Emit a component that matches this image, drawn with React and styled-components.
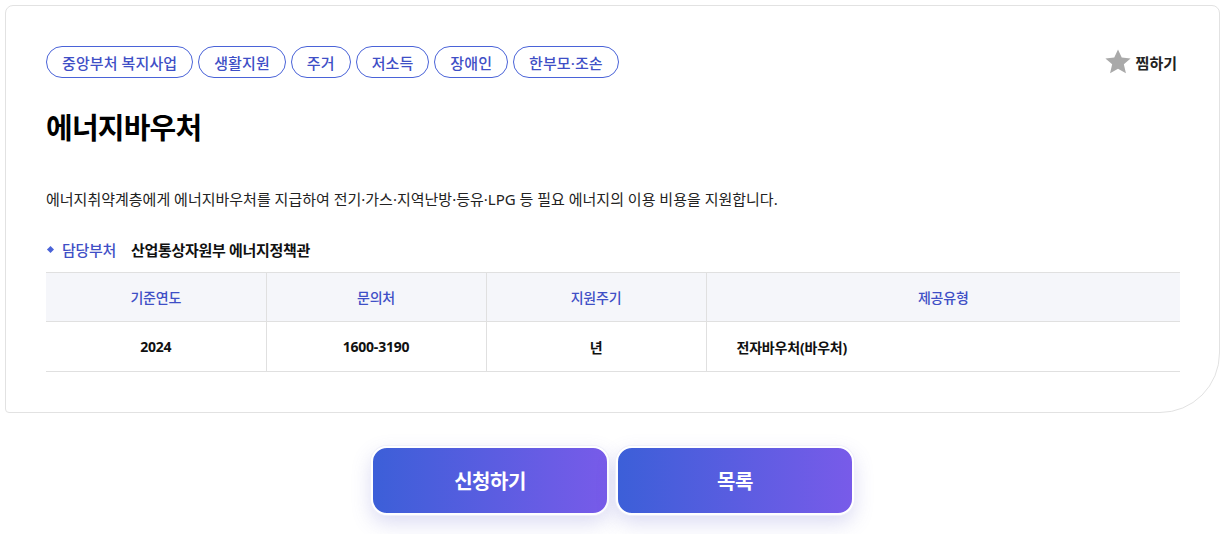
import React from 'react';
import styled, { createGlobalStyle } from 'styled-components';

const GlobalStyle = createGlobalStyle`
  html, body {
    margin: 0;
    padding: 0;
    background: #fff;
    font-family: "Noto Sans", "Noto Sans CJK KR", sans-serif;
    color: #111;
  }
`;

const Page = styled.div`
  padding: 5px 12px 20px 5px;
  width: 1232px;
  box-sizing: border-box;
`;

const Card = styled.section`
  border: 1px solid #e2e2e2;
  border-radius: 8px 8px 60px 4px;
  padding: 40px 39px 40px 40px;
  background: #fff;
`;

const TopRow = styled.div`
  display: flex;
  justify-content: space-between;
  align-items: center;
`;

const Chips = styled.div`
  display: flex;
  gap: 5px;
`;

const Chip = styled.span`
  display: inline-flex;
  align-items: center;
  height: 32px;
  padding: 0 15px;
  box-sizing: border-box;
  border: 1px solid #4a63d8;
  border-radius: 16px;
  color: #3f4fc6;
  font-size: 15px;
  font-weight: 500;
  letter-spacing: 0.1px;
`;

const Favorite = styled.button`
  display: flex;
  align-items: center;
  gap: 4px;
  border: 0;
  background: none;
  padding: 0;
  margin-right: 3px;
  font-family: inherit;
  font-size: 15px;
  font-weight: 700;
  color: #222;
  cursor: pointer;
`;

const Title = styled.h1`
  margin: 30px 0 0;
  font-size: 29px;
  font-weight: 700;
  letter-spacing: -0.8px;
  line-height: 40px;
  color: #000;
`;

const Desc = styled.p`
  margin: 40px 0 0;
  font-size: 15px;
  letter-spacing: 0;
  line-height: 22px;
  color: #222;
`;

const Dept = styled.div`
  display: flex;
  align-items: center;
  margin-top: 29px;
  font-size: 15px;
  letter-spacing: -0.3px;
`;

const DeptLabel = styled.span`
  display: flex;
  align-items: center;
  gap: 9px;
  color: #3f4fc6;
  font-weight: 500;
  margin-right: 15px;
  &::before {
    content: '';
    width: 5px;
    height: 5px;
    margin-left: 2px;
    background: #4a63d8;
    transform: rotate(45deg);
  }
`;

const DeptValue = styled.span`
  font-weight: 700;
  color: #111;
`;

const Table = styled.table`
  width: 100%;
  margin-top: 12px;
  border-collapse: collapse;
  table-layout: fixed;
  font-size: 14px;
  letter-spacing: -0.2px;
`;

const Th = styled.th`
  height: 48px;
  padding: 0;
  background: #f5f6fa;
  color: #3f4fc6;
  font-weight: 500;
  border-top: 1px solid #e0e0e0;
  border-bottom: 1px solid #e0e0e0;
  & + & {
    border-left: 1px solid #e0e0e0;
  }
`;

const Td = styled.td`
  height: 49px;
  padding: ${p => (p.left ? '0 0 0 30px' : '0')};
  text-align: ${p => (p.left ? 'left' : 'center')};
  font-weight: 700;
  color: #111;
  border-bottom: 1px solid #e0e0e0;
  & + & {
    border-left: 1px solid #e0e0e0;
  }
`;

const Actions = styled.div`
  display: flex;
  justify-content: center;
  gap: 7px;
  margin-top: 33px;
`;

const ActionButton = styled.button`
  width: 238px;
  height: 69px;
  border: 2px solid #fff;
  border-radius: 16px;
  background: linear-gradient(90deg, #3c5fd8 0%, #785be9 100%);
  box-shadow: 0 0 0 1px #f0f0fa, 0 8px 20px rgba(90, 90, 200, 0.22);
  color: #fff;
  font-family: inherit;
  font-size: 20px;
  font-weight: 700;
  letter-spacing: -0.5px;
  cursor: pointer;
`;

const StarIcon = () => (
  <svg width="28" height="28" viewBox="0 0 24 24">
    <path
      d="M12 1.2l3.2 7 7.6.7-5.8 5.1 1.8 7.6L12 17.7l-6.8 3.9 1.8-7.6-5.8-5.1 7.6-.7z"
      fill="#a9a9a9"
    />
  </svg>
);

const tags = ['중앙부처 복지사업', '생활지원', '주거', '저소득', '장애인', '한부모·조손'];

export default function App() {
  return (
    <Page>
      <GlobalStyle />
      <Card>
        <TopRow>
          <Chips>
            {tags.map(t => (
              <Chip key={t}>{t}</Chip>
            ))}
          </Chips>
          <Favorite>
            <StarIcon />
            찜하기
          </Favorite>
        </TopRow>
        <Title>에너지바우처</Title>
        <Desc>
          에너지취약계층에게 에너지바우처를 지급하여 전기·가스·지역난방·등유·LPG 등 필요 에너지의 이용 비용을 지원합니다.
        </Desc>
        <Dept>
          <DeptLabel>담당부처</DeptLabel>
          <DeptValue>산업통상자원부 에너지정책관</DeptValue>
        </Dept>
        <Table>
          <colgroup>
            <col style={{ width: '220px' }} />
            <col style={{ width: '220px' }} />
            <col style={{ width: '220px' }} />
            <col />
          </colgroup>
          <thead>
            <tr>
              <Th>기준연도</Th>
              <Th>문의처</Th>
              <Th>지원주기</Th>
              <Th>제공유형</Th>
            </tr>
          </thead>
          <tbody>
            <tr>
              <Td>2024</Td>
              <Td>1600-3190</Td>
              <Td>년</Td>
              <Td left>전자바우처(바우처)</Td>
            </tr>
          </tbody>
        </Table>
      </Card>
      <Actions>
        <ActionButton>신청하기</ActionButton>
        <ActionButton>목록</ActionButton>
      </Actions>
    </Page>
  );
}
